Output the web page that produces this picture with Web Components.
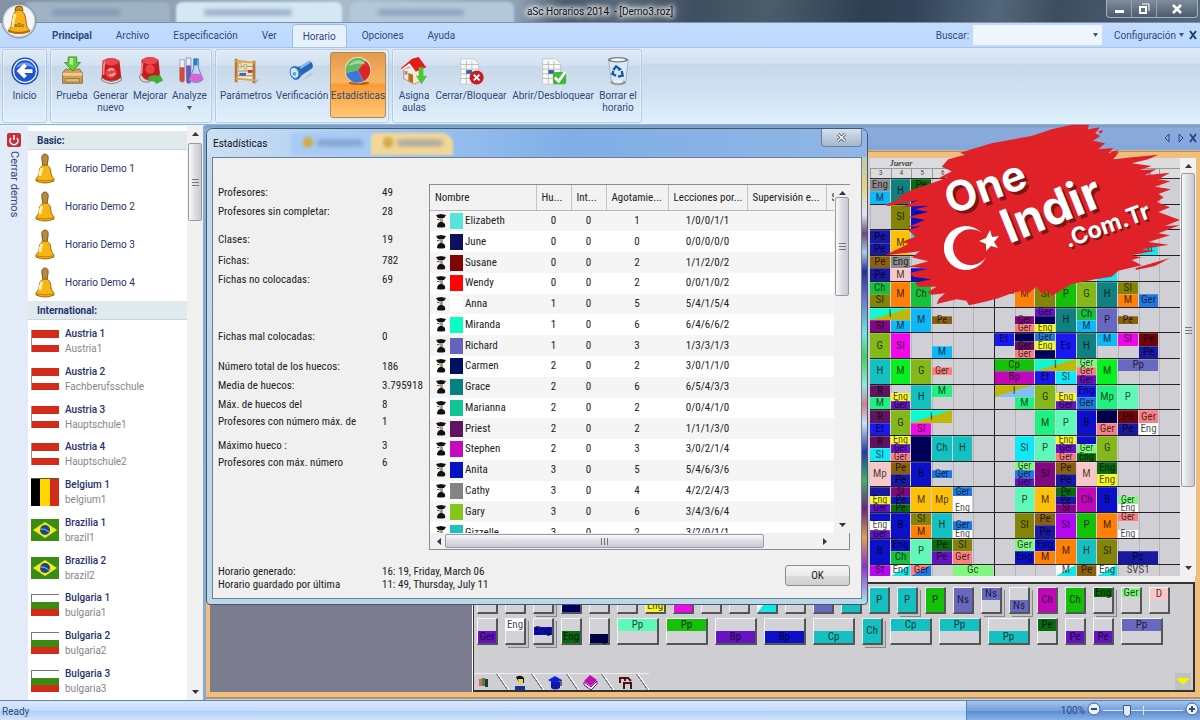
<!DOCTYPE html>
<html lang="es">
<head>
<meta charset="utf-8">
<title>aSc Horarios 2014 - [Demo3.roz]</title>
<style>
  :root {
    --ui: Roboto, "Open Sans", sans-serif;
    --dlg: "Roboto Condensed", "Open Sans Condensed", Roboto, sans-serif;
    --ink: #2d4a7c;
  }
  html, body { margin: 0; height: 100%; }
  body { font: 10px/13px var(--ui); color: var(--ink); overflow: hidden; }
</style>
</head>
<body>
<asc-app></asc-app>
<script>
const BASE = '<style>*{box-sizing:border-box}button,input{font:inherit;color:inherit;margin:0;padding:0;border:0;background:none}a{color:inherit;text-decoration:none}</style>';
function define(name, html, init) {
  const t = document.createElement('template');
  t.innerHTML = BASE + html;
  customElements.define(name, class extends HTMLElement {
    constructor() {
      super();
      this.attachShadow({ mode: 'open' }).append(t.content.cloneNode(true));
    }
    connectedCallback() { if (init && !this.ready) { this.ready = true; init(this.shadowRoot, this); } }
  });
}

const ICONS = {
  back: '<circle cx="16" cy="16" r="14.500" fill="#1446b4"/><circle cx="16" cy="16" r="13" fill="#eaf2ff"/><circle cx="16" cy="16" r="11.500" fill="#1d55cf"/><path d="M6 13a11 11 0 0 1 20 0q-10-5-20 0" fill="#6f9dee"/><path d="M7 16l8-8 3 3-3 3h9v4h-9l3 3-3 3z" fill="#fff"/>',
  box: '<path d="M6 18l3-4h15l3 4v11H6z" fill="#cf9d55" stroke="#92672b"/><path d="M6 18h21v3H6z" fill="#efcf95"/><path d="M9 24h15v4H9z" fill="#dcb57b" stroke="#a4783b"/><path d="M12 1h9v6h4l-8 9-9-9h4z" fill="#62cf3b" stroke="#2f9a20"/><path d="M14 2h3v8l-4-2z" fill="#b7f096"/>',
  bin: '<path d="M7 5q9-6 18 0l2 19q-10 8-21 0z" fill="#c51a20"/><ellipse cx="16" cy="6" rx="8" ry="4" fill="#e8484e"/><path d="M6 23q10 8 21 0v3q-10 7-21 0z" fill="#ddd8d8" stroke="#897979"/><circle cx="16" cy="18" r="6" fill="#e64444"/><path d="M13 16a4 4 0 0 1 6-1m1 3a4 4 0 0 1-6 2" stroke="#ffb0a8" stroke-width="2" fill="none"/><path d="M9 6q-1 8-1 14" stroke="#f48a8a" stroke-width="2" fill="none"/>',
  better: '<path d="M7 4q9-6 18 0l2 19q-10 8-21 0z" fill="#c51a20"/><ellipse cx="16" cy="5" rx="8" ry="4" fill="#e8484e"/><path d="M5 21q-1 7 9 7l3-2q-8 0-10-6z" fill="#ddd8d8" stroke="#897979"/><circle cx="16" cy="14" r="5" fill="#e64444"/><path d="M13 24q4-5 12-3l1-2 4 7-8 4 0-2q-5-1-9-4z" fill="#42ad35"/><path d="M8 7q-1 6-1 12" stroke="#f48a8a" stroke-width="2" fill="none"/>',
  tubes: '<path d="M5 4h5v22q-2 4-5 0z" fill="#f3eaf2" stroke="#9ea5c3"/><path d="M5 12h5v14q-2 4-5 0z" fill="#d54c36"/><path d="M12 2h5v18h-5z" fill="#e6edf8" stroke="#8d9dc3"/><path d="M12 10h5v18q-2 3-5 0z" fill="#6c58b5"/><path d="M20 3h5v10l5 12q-6 6-15 1l5-13z" fill="#bfd5f5" stroke="#5d7fb9"/><path d="M20 3h4v7h-4z" fill="#287fc1"/><path d="M18 19h9l3 6q-7 5-14 1z" fill="#d765d6"/>',
  abacus: '<path d="M5 5h20v21H5z" fill="#efe6d0"/><path d="M4 3h3v25H4zM23 5h3v24h-3z" fill="#b7792f"/><path d="M5 4l20 2v2L5 7zm0 19l21 2v2L5 25z" fill="#dba45c"/><path d="M7 11h16M7 16h16M7 21h16" stroke="#9b8460"/><path d="M8 8h3v5H8zm6 1h3v5h-3z" fill="#eddb9b" stroke="#9c8c50" stroke-width=".5"/><path d="M18 15h5v3h-5z" fill="#c93228"/><path d="M9 18h7v3H9z" fill="#3469bb"/><path d="M26 26l4-2-4 6z" fill="#a7b0ba"/>',
  torch: '<path d="M18 25l11-7-4 1-10 8z" fill="#a9bbcc"/><path d="M9 12l6-1 9-6q5 3 3 8l-9 6-5 4z" fill="#2666b7"/><path d="M14 13l11-7" stroke="#8dbceb" stroke-width="2"/><ellipse cx="9" cy="18" rx="6" ry="7.500" transform="rotate(-20 9 18)" fill="#2f70b9"/><ellipse cx="8" cy="18" rx="4" ry="5.500" transform="rotate(-20 8 18)" fill="#c9e8f8"/><circle cx="8" cy="19" r="2" fill="#7d9db8"/>',
  pie: '<ellipse cx="17" cy="29" rx="11" ry="2" fill="#b96415"/><circle cx="16" cy="15" r="14" fill="#fff3e7"/><path d="M16 15L3 18A13 13 0 0 1 24 5z" fill="#62bb5d"/><path d="M16 15l8-10a13 13 0 0 1-2 22z" fill="#dc2525"/><path d="M16 15l6 12A13 13 0 0 1 3 18z" fill="#3c78d5"/><path d="M5 11q10-12 20-2-12-2-20 2" fill="#fff" opacity=".4"/>',
  house: '<path d="M5 13v11l11 6 9-4V11z" fill="#f4ead6" stroke="#b2946e"/><path d="M2 13L14 3l7-2 8 11-12 5-6-7-7 6z" fill="#e31b1b"/><path d="M3 15l8-6 6 8" fill="none" stroke="#fff" stroke-width="2"/><path d="M10 18l5 2v9l-5-2z" fill="#be6c24"/><path d="M6 16h3v4H6z" fill="#8b92a6"/><path d="M21 12h5v9h4l-6 9-6-9h3z" fill="#4cc632"/>',
  sheet: '<path d="M5 3h14l5 5v22H5z" fill="#fafafa" stroke="#c2c5cb"/><path d="M5 9h19M5 14h19M5 19h19M5 24h19M11 5v25M17 5v25" stroke="#bbb"/><path d="M11 15h6v4h-6z" fill="#3065a5"/>',
  trash: '<path d="M6 4h21l-3 25q-8 4-15 0z" fill="#dae8f5" stroke="#a2b1c5"/><ellipse cx="16" cy="4" rx="11" ry="3" fill="#79828c"/><ellipse cx="16" cy="4" rx="8" ry="1.500" fill="#f4f8fa"/><path d="M11 15l3-4 4 3-2 1m4 1l1 5-5 1m-2-1l-4-2 1-3" fill="none" stroke="#1956aa" stroke-width="2.500"/><ellipse cx="16" cy="28" rx="8" ry="2.500" fill="#858d96"/><ellipse cx="16" cy="27" rx="6" ry="2" fill="#eee"/>',
};
ICONS.close = ICONS.sheet + '<circle cx="22" cy="23" r="7.500" fill="#c81d25"/><path d="M19 20l6 6m0-6l-6 6" stroke="#fff" stroke-width="2"/>';
ICONS.open = ICONS.sheet + '<rect x="16" y="17" width="14" height="13" rx="2" fill="#42b83a"/><path d="M18 23l4 4 7-10" fill="none" stroke="#fff" stroke-width="3"/>';

const BELL = '<path d="M14 1q4 0 3 6l-1 6h-4l-1-6q-1-6 3-6" fill="#b58a3c" stroke="#7b5a20"/><path d="M14 12q6 0 6 9 1 3 3 5v2q-9 4-18 0v-2q2-2 3-5 0-9 6-9" fill="#f7b516" stroke="#a06a08"/><path d="M11 15q-2 4-2 8" stroke="#fff0a0" stroke-width="3" fill="none"/><path d="M6 27q8 2 16 0" stroke="#c27c08" fill="none"/>';
const FLAGS = {
  at: '<path d="M0 3h28v22H0z" fill="#fff"/><path d="M0 3h28v8H0zm0 15h28v7H0z" fill="#d42a1a"/><path d="M.5 3v22" stroke="#a88"/>',
  be: '<path d="M0 0h9v28H0z"/><path d="M9 0h10v28H9z" fill="#ffd800"/><path d="M19 0h9v28h-9z" fill="#d42a1a"/><path d="M0 .500h28" stroke="#554"/>',
  br: '<path d="M0 3h28v22H0z" fill="#3a8c12"/><path d="M2 14L14 6l12 8-12 8z" fill="#fbe623"/><circle cx="14" cy="14" r="5" fill="#174a86"/><path d="M9 13q5-1 9 3" stroke="#9fc0d4" fill="none"/>',
  bg: '<path d="M0 3h28v8H0z" fill="#fff"/><path d="M0 11h28v7H0z" fill="#3a8c12"/><path d="M0 18h28v7H0z" fill="#d42a1a"/><path d="M0 3.500h28M.5 3v9" stroke="#777" fill="none"/>',
  bell: BELL,
};

define('asc-titlebar', `<style>
:host{display:grid;grid-template-columns:1fr auto 1fr;align-items:start;height:23px;position:relative;overflow:hidden;border-bottom:1px solid #7d8fa5;
 background:linear-gradient(100deg,#8294a4 0,#8fa1b2 14%,#a9bdcd 30%,#8fa3b4 43%,#4a5b6c 47%,#586878 52%,#3f4f5f 58%,#4c5c6b 64%,#2f3f50 72%,#33445a 76%,#54677a 83%,#3d4d5e 88%,#58697c 100%)}
.tab{position:absolute;top:2px;height:24px;border-radius:6px 6px 0 0;background:#a9bfd0;filter:blur(1px)}
.t1{left:24px;width:146px;background:#9fb3c4}.t2{left:176px;width:166px;background:#d5e7f3}.t3{left:350px;width:164px;background:#b3c8d8}
.tab i{position:absolute;top:8px;height:5px;border-radius:3px;background:#6e86a5;left:28px;right:50px;filter:blur(2px);opacity:.7}
h1{grid-column:2;margin:5px 0 0;font-size:10px;line-height:14px;font-weight:400;color:#111;position:relative;text-shadow:0 0 4px #fff,0 0 6px #fff,0 0 6px #fff,0 0 9px #fff}
.w{justify-self:end;display:flex;margin-right:2px;position:relative;height:18px;border:1px solid #a3b1bd;border-top:0;border-radius:0 0 4px 4px;background:linear-gradient(#7f8e9b,#4c5c6c)}
.w button{width:25px;display:grid;place-items:center;border-right:1px solid #95a2ae}.w button:last-child{width:40px;border:0}
</style><div class="tab t1"><i></i></div><div class="tab t2"><i></i></div><div class="tab t3"><i></i></div>
<h1>aSc Horarios 2014&nbsp; - [Demo3.roz]</h1>
<div class="w"><button aria-label="Minimizar"><svg width="12" height="12"><path d="M2 7h9v3H2z" fill="#fff"/></svg></button><button aria-label="Restaurar"><svg width="12" height="12" fill="none" stroke="#fff" stroke-width="2"><path d="M2 4h6v6H2z"/><path d="M4 1h7v7" stroke-width="1"/></svg></button><button aria-label="Cerrar"><svg width="12" height="12"><path d="M2 2l8 8m0-8l-8 8" stroke="#fff" stroke-width="2.500"/></svg></button></div>`);

define('asc-menu', `<style>
:host{display:flex;align-items:stretch;height:24px;padding-left:40px;background:linear-gradient(#c2dcff,#bdd9ff);position:relative}
a{padding:0 12px;line-height:26px}.b{font-weight:700}
.on{margin:1px 3px 0;padding:0 10px;line-height:24px;background:#e6f1fc;border:1px solid #9bbbe3;border-bottom:0;border-radius:4px 4px 0 0}
.r{margin-left:auto;display:flex;align-items:center;gap:4px;padding-right:2px}
input{width:129px;height:20px;background:#eef5fe;padding:0 14px 0 4px}
.s{position:relative;margin-right:8px}.s svg{position:absolute;right:4px;top:8px}
button{display:flex;align-items:center;gap:3px}
.logo{position:absolute;left:1px;top:-21px;width:36px;height:38px}
</style><svg class="logo" viewBox="0 0 36 38"><circle cx="18" cy="19" r="17" fill="#cdd1d8" stroke="#7f858f"/><circle cx="18" cy="19" r="15" fill="#f6f6f8"/><circle cx="18" cy="8" r="4" fill="#c9901c" stroke="#8c5a08"/><path d="M18 8q6 0 7 11 0 7 4 10-11 5-22 0 4-3 4-10 1-11 7-11" fill="#f8b31a" stroke="#a66a08"/><path d="M14 12q-2 6-2 13" stroke="#ffe994" stroke-width="3" fill="none"/><path d="M8 29q10 4 20 0" stroke="#b46e0a" stroke-width="2" fill="none"/><text x="18" y="25" text-anchor="middle" font-size="6" font-weight="700" fill="#8a5a10">aSc</text></svg>
<a href="#" class="b">Principal</a><a href="#">Archivo</a><a href="#">Especificación</a><a href="#">Ver</a><a href="#" class="on">Horario</a><a href="#">Opciones</a><a href="#">Ayuda</a>
<div class="r"><label for="q">Buscar:</label><span class="s"><input id="q" type="text"><svg width="5" height="4"><path d="M0 0h5L2.500 4z" fill="#456"/></svg></span>
<button>Configuración<svg width="5" height="4"><path d="M0 0h5L2.500 4z" fill="#456"/></svg></button><button aria-label="Cerrar documento"><svg width="10" height="10"><path d="M2 1l6 8m0-8L2 9" stroke="#1d3c70" stroke-width="2"/></svg></button></div>`);

define('ribbon-button', `<style>
:host{display:block;flex:none;width:var(--w,40px)}
button{width:100%;height:66px;margin-top:2px;padding-top:3px;display:flex;flex-direction:column;align-items:center;gap:3px;white-space:nowrap;line-height:12px;border-radius:3px}
:host([on]) button{background:linear-gradient(#e39a4f,#f9b562 45%,#fb9b36 50%,#ffc774);border:1px solid #b08a58;padding-top:2px}
svg{flex:none}.i{padding:1px}
</style><button><svg class="i" width="32" height="32" viewBox="0 0 32 32"></svg><span><slot></slot></span></button>`,
  (r, h) => { r.querySelector('.i').innerHTML = ICONS[h.getAttribute('icon')]; h.style.setProperty('--w', h.getAttribute('w') + 'px'); });

define('ribbon-group', `<style>:host{display:flex;flex:none;height:74px;padding:0 2px;border:1px solid #b5cbe3;border-radius:3px;background:linear-gradient(#dfeaf6,#d3e1f0 15px,#c7d8ea 16px,#d6e5f4 68%,#dff0fc);box-shadow:inset 0 0 0 1px #ffffff60}</style><slot></slot>`);

define('asc-ribbon', `<style>:host{display:flex;gap:3px;height:78px;padding:1px 2px;background:linear-gradient(#dde9f6,#d3e1f0 15px,#c7d8ea 16px,#d2e1f1 60%,#def2fd);border-top:1px solid #a4c4ea;border-bottom:1px solid #8db2dc}</style>
<ribbon-group><ribbon-button icon="back" w="39">Inicio</ribbon-button></ribbon-group>
<ribbon-group><ribbon-button icon="box" w="38">Prueba</ribbon-button><ribbon-button icon="bin" w="39">Generar<br>nuevo</ribbon-button><ribbon-button icon="better" w="40">Mejorar</ribbon-button><ribbon-button icon="tubes" w="39">Analyze<br><svg width="5" height="4" style="display:block;margin:4px auto"><path d="M0 0h5L2.500 4z" fill="#456"/></svg></ribbon-button></ribbon-group>
<ribbon-group><ribbon-button icon="abacus" w="56">Parámetros</ribbon-button><ribbon-button icon="torch" w="56">Verificación</ribbon-button><ribbon-button icon="pie" w="56" on>Estadísticas</ribbon-button></ribbon-group>
<ribbon-group><ribbon-button icon="house" w="38">Asigna<br>aulas</ribbon-button><ribbon-button icon="close" w="76">Cerrar/Bloquear</ribbon-button><ribbon-button icon="open" w="88">Abrir/Desbloquear</ribbon-button><ribbon-button icon="trash" w="42">Borrar el<br>horario</ribbon-button></ribbon-group>`);

/* Scroll bar: attributes give direction, thumb start and thumb length */
define('asc-scroll', `<style>
:host{display:flex;flex-direction:column;align-items:center;background:#f1f1f1;width:16px;padding:5px 0}
:host([h]){flex-direction:row;width:auto;height:16px;padding:0 5px}
.t{flex:var(--n) 1 0;width:14px;border:1px solid #979ba4;border-radius:2px;background:linear-gradient(90deg,#fafafa,#dcdde2 50%,#c8cad2);display:grid;place-items:center}
:host([h]) .t{width:auto;height:14px;background:linear-gradient(#fafafa,#dcdde2 50%,#c8cad2)}
.a{flex:var(--a) 1 0}.z{flex:var(--z) 1 0}
svg{flex:none}:host([h]) svg{transform:rotate(-90deg)}
.g{width:7px;height:7px;background:repeating-linear-gradient(#777 0 1px,transparent 1px 3px)}
:host([h]) .g{background:repeating-linear-gradient(90deg,#777 0 1px,transparent 1px 3px)}
</style><svg width="7" height="5"><path d="M0 5h7L3.500 1z" fill="#334"/></svg><i class="a"></i><div class="t"><i class="g"></i></div><i class="z"></i><svg width="7" height="5"><path d="M0 0h7L3.500 4z" fill="#334"/></svg>`,
  (r, h) => { const [a, n, z] = h.getAttribute('parts').split(' '); h.style.setProperty('--a', a); h.style.setProperty('--n', n); h.style.setProperty('--z', z); });

define('demo-item', `<style>
:host{display:flex;flex:1 1 0;min-height:0}
a{display:flex;align-items:center;gap:6px;padding-left:3px;line-height:15px;color:#27306e}
svg{width:28px;height:28px;flex:none}:host([flag=bell]) svg{width:28px;height:33px}
small{display:block;font-size:10px;color:#86868a}
:host([sub]) b{font-weight:500}b{font-weight:400}
</style><a href="#"><svg viewBox="0 0 28 28"></svg><span><b><slot></slot></b><small></small></span></a>`,
  (r, h) => {
    const f = h.getAttribute('flag'), s = r.querySelector('svg'), sub = h.getAttribute('sub');
    if (f === 'bell') s.setAttribute('viewBox', '0 0 28 31');
    s.innerHTML = FLAGS[f];
    if (sub) r.querySelector('small').textContent = sub; else r.querySelector('small').remove();
  });

define('demo-panel', `<style>
:host{display:flex;width:206px;flex:none;border-top:1px solid #eef5ff;border-right:3px solid #88abd8;background:#e3ebf8}
.rail{width:28px;display:flex;flex-direction:column;align-items:center;padding-top:7px;gap:4px}
.rail button{writing-mode:vertical-rl;font-size:11px;line-height:14px}
.list{flex:1;display:flex;flex-direction:column;background:#fff;padding-top:5px;min-width:0}
h2{margin:0;height:19px;padding-left:9px;font-size:10px;line-height:19px;background:#e0e9ec;border-bottom:1px solid #c9d6dd;color:#1d3470;flex:none}
.n{margin-bottom:2px}
</style><div class="rail"><svg width="14" height="14"><rect width="14" height="14" rx="2" fill="#c3303a"/><path d="M4 5a4 4 0 1 0 6 0M7 2v5" stroke="#fff" stroke-width="1.500" fill="none"/></svg><button>Cerrar demos</button></div>
<nav class="list"><h2>Basic:</h2></nav><asc-scroll parts="7 76 467"></asc-scroll>`,
  r => {
    const l = r.querySelector('.list');
    const add = (flag, t, sub) => { const e = document.createElement('demo-item'); e.setAttribute('flag', flag); if (sub) e.setAttribute('sub', sub); e.textContent = t; l.append(e); };
    for (let i = 1; i < 5; i++) add('bell', 'Horario Demo ' + i);
    const h = document.createElement('h2'); h.textContent = 'International:'; h.className = 'n'; l.append(h);
    [['at','Austria 1','Austria1'],['at','Austria 2','Fachberufsschule'],['at','Austria 3','Hauptschule1'],['at','Austria 4','Hauptschule2'],['be','Belgium 1','belgium1'],['br','Brazilia 1','brazil1'],['br','Brazilia 2','brazil2'],['bg','Bulgaria 1','bulgaria1'],['bg','Bulgaria 2','bulgaria2'],['bg','Bulgaria 3','bulgaria3']].forEach(a => add(...a));
  });

const C = { gy:'#8c8c8c', cy:'#10e8f8', sk:'#10b8f8', te:'#108080', dg:'#0a6a10', ol:'#848408', nb:'#1818a0', bl:'#0c10c8', nv:'#00005c', or:'#ff8008', yo:'#ffc008', ye:'#f8f820', gr:'#18c040', g2:'#14c008', g3:'#08f020', mi:'#20f080', aq:'#60f8b8', lg:'#80f880', gg:'#84b818', br:'#8a6010', pk:'#f8c8c8', sa:'#f88080', pu:'#800880', p2:'#6414c0', pr:'#601460', mg:'#f008e8', m2:'#c008b8', vi:'#6868c0', dr:'#700408', b2:'#2078e0', tq:'#14c0c0', wh:'#fff', st:'#b408f0', es:'#1818f0', no:'transparent',
  d1:'linear-gradient(to bottom right,#10f8d0 50%,#c0b808 50%)', d2:'linear-gradient(to bottom right,#c0b808 50%,#80c0f8 50%)', d3:'linear-gradient(to bottom right,#fff 50%,#10e8e8 50%)', d4:'linear-gradient(to bottom right,#f88080 50%,#2078e0 50%)' };

/* One string per class; a block is column.span.start.rows.colour.text on six sub-rows */
const ROWS = [
 '0.1.1.3.gy.Eng 0.1.4.3.sk.M 1.1.1.6.te.H 2.1.1.3.dg.Pe 2.1.4.3.nb.',
 '1.1.1.6.ol.SI 2.1.1.6.bl.Pe',
 '0.1.1.3.nb.Pe 0.1.4.3.nb.Pe 1.1.1.6.yo.M 2.1.1.3.cy. 13.1.4.3.cy.SI',
 '0.1.1.3.br.Pe 0.1.4.3.nb.Pe 1.1.1.3.gy.Eng 1.1.4.3.pk.M 2.1.4.3.bl. 8.1.4.3.cy. 11.1.4.3.cy.',
 '0.1.1.3.gr.Ch 0.1.4.3.ol.SI 1.1.1.6.or.M 2.1.1.6.gr.Ch 6.1.1.3.ol.Pe 7.1.1.6.or.M 8.1.1.6.ol.SI 9.1.1.6.g2.P 10.1.1.6.gg.G 11.1.1.6.te.H 12.1.1.3.ol.SI 12.1.4.3.or.M 13.1.4.3.b2.Ger',
 '0.2.1.3.d1.I 0.1.4.3.pu.SI 1.1.4.3.sk.M 2.1.1.6.sk.M 3.1.3.2.br.Pe 7.1.3.2.pu.Ger 7.1.5.2.sa.Ger 8.1.1.2.p2.Ger 8.1.3.2.nv. 8.1.5.2.ye.Eng 9.1.1.6.te.H 10.1.1.3.gr.Ch 10.1.4.3.sk.M 11.1.1.6.vi.P 12.1.3.2.br.Pe',
 '0.1.1.6.gg.G 1.1.1.6.mg.SI 3.1.4.3.sk.M 6.1.1.3.es.Et 7.1.1.2.nv. 7.1.3.2.pr.Ger 7.1.5.2.sa.Ger 8.1.1.2.b2.Ger 8.1.3.2.ye.Eng 8.1.5.2.nv. 9.1.1.6.es.Es 10.1.1.6.te.H 11.1.1.3.sk.M 12.1.1.3.mg.SI 13.1.1.3.dr.Pe 13.1.4.3.nb.Pe',
 '0.1.1.6.tq.H 1.1.1.6.g3.M 2.1.1.6.gg.G 3.1.3.2.sa.Ger 6.2.1.3.g2.Cp 6.2.4.3.m2.Bp 8.2.1.3.d1.I 8.1.4.3.es.Et 9.1.4.3.cy.SI 10.1.1.2.lg.Ger 10.1.3.2.sa.Ger 10.1.5.2.p2.Ger 11.1.1.6.g3.M 12.2.1.3.vi.Pp',
 '0.1.1.3.pr.R 0.1.4.3.mi.M 1.1.3.2.ye.Eng 1.1.5.2.p2.Ger 2.1.1.6.tq.H 3.1.1.3.mi.M 6.2.1.3.d2.I 7.1.4.3.mi.M 8.1.1.6.gg.G 9.1.3.2.ye.Eng 9.1.5.2.p2.Ger 10.1.1.3.es.Eng 10.1.4.3.b2.Ger 11.1.1.6.mi.Mp 12.1.1.6.aq.P',
 '0.1.1.3.pr.R 0.1.4.3.es.Et 1.1.1.6.gg.G 2.2.1.3.d1.I 2.1.4.3.mg.SI 8.1.1.6.mi.M 9.1.1.6.aq.P 10.1.1.6.bl.B 11.1.1.3.nv.Eng 11.1.4.3.sa.Ger 12.1.1.3.dr.Pe 12.1.4.3.nb.Pe 13.1.1.3.sa.Ger 13.1.4.3.wh.Eng',
 '0.1.1.3.pr.R 0.1.4.3.cy.SI 1.1.1.2.ye.Eng 1.1.3.2.p2.Ger 1.1.5.2.sa.Ger 2.1.1.6.nv.D 3.1.1.6.tq.Ch 4.1.1.6.tq.H 7.1.1.6.cy.SI 8.1.1.6.aq.P 9.1.1.2.ye.Eng 9.1.3.2.p2.Ger 9.1.5.2.sa.Ger 10.1.1.2.bl. 10.1.3.2.lg.Ger 10.1.5.2.dg.Eng 11.1.1.6.gg.G',
 '0.1.1.6.pk.Mp 1.1.1.3.br.Pe 1.1.4.3.nb.Pe 2.1.1.6.bl.B 3.1.3.2.b2.Ger 7.1.1.2.lg.Ger 7.1.3.2.b2.Ger 7.1.5.2.p2.Ger 8.1.1.6.pu.SI 9.1.1.3.br.Pe 9.1.4.3.nb.Pe 10.1.1.6.pk.M 11.1.1.3.dg.Eng 11.1.4.3.ye.Eng',
 '0.1.1.2.nb. 0.1.3.2.ye.Eng 0.1.5.2.p2.Ger 1.1.1.2.pu.SI 1.1.3.2.nb.Pe 1.1.5.2.dg.Pe 2.1.1.6.yo.M 3.1.1.6.yo.Mp 4.1.1.2.b2.Ger 4.1.3.2.wh. 4.1.5.2.wh.Eng 7.1.1.6.aq.P 8.1.1.6.yo.M 9.1.1.2.dg.Pe 9.1.3.2.nb.Pe 9.1.5.2.pu.SI 10.1.1.6.m2.Ch 11.1.1.6.bl.B 12.1.3.2.lg.Ger 12.1.5.2.wh.Eng',
 '0.1.1.2.bl. 0.1.3.2.wh.Eng 0.1.5.2.p2.Ger 1.1.1.6.bl.B 2.1.1.3.ol.SI 2.1.4.3.or.M 3.1.1.6.tq.H 4.1.3.2.b2.Ger 4.1.5.2.wh.Eng 7.1.1.6.ol.SI 8.1.1.3.br.Pe 8.1.4.3.nb.Pe 9.1.1.6.st.St 10.1.1.6.g2.P 11.1.1.6.or.M 12.1.1.2.sa.Ger 12.1.5.2.wh.Eng',
 '0.1.1.6.bl.B 1.1.1.3.bl.Eng 1.1.4.3.gr.Ch 2.1.1.6.aq.P 3.1.1.3.dg.Pe 3.1.4.3.p2.Pe 4.1.1.3.ol.SI 4.1.4.3.sa.Ger 7.1.1.3.lg.Ger 7.1.4.3.bl.Eng 8.1.1.3.bl.Eng 8.1.4.3.or.M 9.1.1.6.or.M 10.1.1.6.tq.H 11.1.1.6.ol.SI 12.2.4.3.nb.Pc',
 '0.1.1.6.st.St 1.1.1.6.d3.Eng 2.1.1.6.d4.Ger 4.2.1.6.lg.Gc 9.1.1.6.d3.M 10.1.1.6.br.Pe 11.1.1.6.d3.Eng 12.2.1.6.no.SVS1',
];

define('time-grid', `<style>
:host{display:grid;grid-template-columns:minmax(0,1fr) 15px;grid-template-rows:minmax(0,1fr);min-width:0;font:11px/12px var(--dlg);color:#000}
.g{display:flex;flex-direction:column;background:#cfcfd5;position:relative;overflow:hidden}
.d,.n{display:grid;grid-template-columns:repeat(15,1fr);background:#dcdcde;text-align:center;font-size:7px;color:#444;flex:none}
.d{height:11px;line-height:11px;font-family:"Liberation Serif",serif;font-style:italic;font-weight:700;border-bottom:1px solid #999;font-size:8px}.d span{grid-column:1/4}
.n{height:10px;line-height:9px;border-bottom:1px solid #333}.n span{border-left:1px solid #999}
.r{flex:26 1 0;min-height:0;display:grid;grid-template-columns:repeat(15,minmax(0,1fr));grid-template-rows:repeat(6,minmax(0,1fr));border-bottom:1px solid #222;
 background:repeating-linear-gradient(90deg,#b4b4ba 0 1px,transparent 1px calc(100% / 15))}
.r:last-child{flex-grow:12;border:0}
.r span{display:grid;place-items:center;align-content:center;text-align:center;color:#000000b8;margin-right:1px;line-height:12px;min-height:0;box-shadow:inset 0 1px #ffffff30}
.r .t{font-size:10px;line-height:8px}
.bar{position:absolute;left:40%;top:11px;bottom:0;width:1px;background:#222}
</style><div class="g"><div class="d"><span>Juevar</span></div><div class="n"></div><i class="bar"></i></div><asc-scroll parts="5 318 80"></asc-scroll>`,
  r => {
    r.querySelector('.n').innerHTML = [3,4,5,6,7,8,1,2,3,4,5,6,7,8,''].map(x => '<span>' + x + '</span>').join('');
    const g = r.querySelector('.g');
    ROWS.forEach(s => {
      const row = document.createElement('div'); row.className = 'r';
      s.split(' ').forEach(b => {
        const [c, w, y, h, k, t] = b.split('.'), e = document.createElement('span');
        e.style.cssText = `grid-column:${+c + 1}/span ${w};grid-row:${y}/span ${h};background:${C[k]}`;
        if (h === '2') e.className = 't';
        e.textContent = t; row.append(e);
      });
      g.append(row);
    });
  });

/* Unplaced cards: width.colour.position.text[.stack] */
const CARDS = [
 '1.no.f. 1.no.f. 1.no.f..s 1.nv.f. 1.no.f. 1.no.f. 1.ye.b.Eng 1.mg.f. 1.no.f. 1.no.f. 1.d3.f. 1.no.f. 1.vi.f. 1.tq.f. 1.tq.f.P 1.tq.f.P.s 1.g2.f.P 1.vi.f.Ns 1.vi.t.Ns.s 1.vi.b.Ns.s 1.m2.f.Ch 1.g2.f.Ch 1.dg.c.Eng.s 1.lg.c.Ger 1.pk.t.D',
 '1.p2.b.Ger 1.wh.t.Eng.s 1.bl.m.Eng.s 1.dg.b.Eng 1.nv.l.Eng 2.aq.t.Pp 2.g2.t.Pp 2.p2.b.Bp 2.bl.b.Bp 2.tq.b.Cp 1.tq.f.Ch.s 2.tq.t.Cp 2.tq.t.Pp 2.tq.b.Pp 1.dg.t.Pe 1.p2.b.Pe 1.p2.b.Pe 2.vi.t.Pp',
];
define('card-tray', `<style>
:host{display:flex;flex-direction:column;background:#cfcfd3;border:2px solid #333;border-left-width:1px;box-shadow:-1px 0 #fff;padding:3px 2px 0 3px;font:11px/12px var(--dlg);color:#000000c0;overflow:hidden}
.row{display:flex;gap:7px;margin-bottom:4px;flex:none}
.row div{width:21px;height:27px;flex:none;display:flex;flex-direction:column;background:#d3d3d7;border:1px solid #f5f5f5;border-right:2px solid #555;border-bottom:2px solid #555;text-align:center}
.row .w{width:42px}.row .s{box-shadow:2px 2px #c4c4c8,3px 3px #888}
span{display:block;line-height:12px;height:12px}
.f span{height:24px;line-height:24px}.b span,.l span{margin-top:12px}.m span{margin-top:8px;height:8px;line-height:8px}.c span{height:9px;line-height:9px}.l span{margin-top:15px;height:9px;line-height:9px}
.foot{margin-top:auto;display:flex;align-items:end;flex:none;margin-left:-3px}
.foot button{width:35px;height:17px;display:flex;align-items:center;padding-left:4px;border-top:1px solid #eee;background:linear-gradient(55deg,transparent 71%,#777 72% 74%,#fff 75% 77%,transparent 78%)}
.foot .y{margin-left:auto;width:16px;padding:0 1px;background:#c0c0c0;border:0}
</style><div class="row"></div><div class="row"></div>
<div class="foot">
<button aria-label="Horario"><svg width="14" height="14"><path d="M1 4h3v7H1z" fill="#d66"/><path d="M4 3h3v8H4z" fill="#484"/><path d="M7 4h3v8H7z" fill="#333"/></svg></button>
<button aria-label="Profesores"><svg width="14" height="15"><path d="M3 2q5-3 8 1v5H9L5 6z" fill="#111"/><path d="M5 4h5v6H6z" fill="#e8d060"/><path d="M2 11h10v4H2z" fill="#1830a0"/></svg></button>
<button aria-label="Clases"><svg width="15" height="15"><path d="M7 1l7 4-7 4-7-4z" fill="#1020e0"/><path d="M3 7h9v6q-5 3-9 0z" fill="#1018a8"/><path d="M13 5v6" stroke="#000"/></svg></button>
<button aria-label="Asignaturas"><svg width="15" height="15"><path d="M7 0l7 5-6 6-7-5z" fill="#c010b0"/><path d="M1 7l7 5 6-6v3l-6 6-7-5z" fill="#fff" stroke="#808"/></svg></button>
<button aria-label="Aulas"><svg width="15" height="15" stroke="#501010" stroke-width="2" fill="none"><path d="M1 3h9l3 3M2 3v5m5-5v3M5 8h9M6 8v6m7-6v6"/></svg></button>
<button class="y" aria-label="Mostrar"><svg width="14" height="9"><path d="M0 1h14L7 8z" fill="#f4f400"/></svg></button></div>`,
  r => r.querySelectorAll('.row').forEach((row, i) => {
    row.innerHTML = CARDS[i].split(' ').map(c => { const [w, k, p, t, s] = c.split('.'); return `<div class="${p}${w > 1 ? ' w' : ''}${s ? ' s' : ''}"><span style="background:${C[k]}">${t}</span></div>`; }).join('');
  }));

const STATS = [['Profesores:','49',0],['Profesores sin completar:','28',2],['Clases:','19',11],['Fichas:','782',4],['Fichas no colocadas:','69',2],['Fichas mal colocadas:','0',40],['Número total de los huecos:','186',13],['Media de huecos:','3.795918',2],['Máx. de huecos del','8',2],['Profesores con número máx. de','1',0],['Máximo hueco :','3',7],['Profesores con máx. número','6',0]];
const PEOPLE = [['Elizabeth','#58e4da',0,1,'1/0/0/1/1'],['June','#101060',0,0,'0/0/0/0/0'],['Susane','#800404',0,2,'1/1/2/0/2'],['Wendy','#ff0404',0,2,'0/0/1/0/2'],['Anna','#fff',1,5,'5/4/1/5/4'],['Miranda','#08ffc4',1,6,'6/4/6/6/2'],['Richard','#6464bc',1,3,'1/3/3/1/3'],['Carmen','#001060',2,2,'3/0/1/1/0'],['Grace','#088080',2,6,'6/5/4/3/3'],['Marianna','#10c494',2,2,'0/0/4/1/0'],['Priest','#601464',2,2,'1/1/1/3/0'],['Stephen','#c808c0',2,3,'3/0/2/1/4'],['Anita','#0414c0',3,5,'5/4/6/3/6'],['Cathy','#848484',3,4,'4/2/2/4/3'],['Gary','#84c41c',3,6,'3/4/3/6/4'],['Gizzelle','#20c0bc',3,2,'3/2/0/1/1']];

define('teacher-list', `<style>
:host{display:grid;grid-template-columns:minmax(0,1fr) 15px;grid-template-rows:minmax(0,1fr) 16px;border:1px solid #8a8d92;background:#f0f0f0}
.v{overflow:hidden;background:#fff}
table{border-collapse:collapse;table-layout:fixed;width:405px;height:358px}
thead tr{height:25px}
th{font-weight:400;text-align:left;padding:0 0 0 5px;border-right:1px solid #c4c4c8;border-bottom:1px solid #b8b8bc;background:#f2f2f2;white-space:nowrap}
td{text-align:center;padding:0;line-height:12px}
tbody tr:nth-child(odd){background:#f5f5f5}
.n{display:flex;align-items:center;padding-left:6px;gap:2px}
.n i{width:13px;height:16px;margin-left:2px}
</style><div class="v"><table><colgroup><col width="106"><col width="35"><col width="35"><col width="62"><col width="79"><col width="79"><col></colgroup>
<thead><tr><th>Nombre</th><th>Hu...</th><th>Int...</th><th>Agotamie...</th><th>Lecciones por...</th><th>Supervisión e...</th><th>S</th></tr></thead><tbody></tbody></table></div>
<asc-scroll parts="2 94 220"></asc-scroll><asc-scroll h parts="3 316 58"></asc-scroll>`,
  r => r.querySelector('tbody').innerHTML = PEOPLE.map(([n, c, h, a, l]) => `<tr><td><div class="n"><svg width="10" height="14"><path d="M0 1l5-1 5 1-2 3H2z" fill="#111"/><path d="M3 4h4v4H4z" fill="#b5977c"/><path d="M1 13q0-4 3-5h2q4 1 3 5-4 1-8 0" fill="#111"/><path d="M1 5h2v1H1z" fill="#555"/></svg><i style="background:${c}"></i>${n}</div></td><td>${h}</td><td>0</td><td>${a}</td><td>${l}</td><td></td><td></td></tr>`).join(''));

define('stats-dialog', `<style>
:host{display:flex;flex-direction:column;border:1px solid #44586c;border-radius:7px 7px 4px 4px;padding:0 5px 5px;font:11px/13px var(--dlg);color:#222;overflow:hidden;
 background:linear-gradient(#b8ddf0 0 4%,transparent 4%) left/6px 100% no-repeat,linear-gradient(#8fc5ea,#e8cf80 12%,#dfe6f2 18%,#704878 22%,#b0c8e0 26%,#2030a0 30%,#7078c8 36%,#70e8e0 43%,#40d060 48%,#90e8e0 54%,#d08090 58%,#c8e0f8 62%,#2838a8 68%,#48b060 74%,#702080 80%,#e0a050 86%,#9030d0 92%,#a8e8f0) right/6px 100% no-repeat,
 linear-gradient(#c4d8ec,#bcd7e8)}
header{display:flex;align-items:center;height:28px;flex:none;position:relative;margin:0 -5px;padding-left:6px;background:linear-gradient(90deg,#cde0f2,#b4d2f5 16%,#9cc4f2 30%,#82aee6 55%,#8fb6e6)}
h2{margin:0;font:10px/13px var(--ui);color:#111}
.tb{position:absolute;top:4px;height:22px;width:82px;border-radius:5px 12px 0 0;filter:blur(1px);background:#a7cbf5}.o{background:#f3d797}
.tb i{position:absolute;left:26px;right:10px;top:7px;height:6px;border-radius:3px;background:#6880a8;filter:blur(2px);opacity:.6}.tb:before{content:"";position:absolute;left:12px;top:4px;width:10px;height:11px;border-radius:5px;background:#cfae4c;filter:blur(1px)}
.x{margin-left:auto;align-self:start;width:41px;height:18px;margin-right:5px;border:1px solid #6f7f94;border-top:0;border-radius:0 0 4px 4px;display:grid;place-items:center;background:linear-gradient(#d4e0ee,#a5b7cd);position:relative}
.c{flex:1;background:#f0f0f0;border:1px solid #6f7f90;display:grid;grid-template-columns:211px 1fr;grid-template-rows:366px 1fr;padding:26px 11px 0 5px;min-height:0}
dl{margin:0;display:flex;flex-direction:column}
dl div{display:grid;grid-template-columns:164px 1fr;flex:none}.k div{line-height:17px}
dt{white-space:nowrap}dd{margin:0;white-space:nowrap}
.f{grid-column:1/3;display:flex;justify-content:space-between;align-items:start}.f dl{padding-top:15px}
.ok{width:65px;height:21px;margin-top:15px;border:1px solid #8a8d92;border-radius:3px;background:linear-gradient(#f4f4f4,#ebebeb 50%,#dcdcdc 51%,#d0d0d0)}
</style><header><div class="tb" style="left:84px"><i></i></div><div class="tb o" style="left:164px"><i></i></div><h2>Estadísticas</h2><button class="x" aria-label="Cerrar"><svg width="11" height="9"><path d="M2 1l7 7m0-7L2 8" stroke="#445" stroke-width="3"/><path d="M2 1l7 7m0-7L2 8" stroke="#fff" stroke-width="1.500"/></svg></button></header>
<div class="c"><dl class="k"></dl><teacher-list></teacher-list>
<div class="f"><dl><div><dt>Horario generado:</dt><dd>16: 19, Friday, March 06</dd></div><div><dt>Horario guardado por última</dt><dd>11: 49, Thursday, July 11</dd></div></dl><button class="ok">OK</button></div></div>`,
  r => r.querySelector('.k').innerHTML = STATS.map(([a, b, m]) => `<div style="margin-top:${m}px"><dt>${a}</dt><dd>${b}</dd></div>`).join(''));

define('asc-workspace', `<style>
:host{display:flex;flex-direction:column;flex:1;position:relative;min-width:0}
.tabs{height:26px;flex:none;display:flex;justify-content:end;align-items:center;gap:4px;padding-right:2px;background:linear-gradient(#7f9fc4 0 2px,#8bacda 3px,#84a7dc);border-bottom:1px solid #d5b58d}
.doc{flex:1;min-height:0;display:flex;flex-direction:column;padding:6px 5px 5px 4px;background:#f0bf80;border:1px solid #b7915f;border-width:1px 0 2px;margin-bottom:1px}
.in{flex:1;min-height:0;display:flex;flex-direction:column;background:#7b7c8e}
.top{flex:1;min-height:0;display:flex;background:#cfcfd5}.top i{flex:0 0 660px}.top time-grid{flex:1}
card-tray{height:110px;margin-left:263px;flex:none}
.gap{height:6px;background:#f0f0f0;flex:none}
stats-dialog{position:absolute;left:0;top:3px;width:662px;height:477px}
</style><div class="tabs"><svg width="9" height="10" fill="none" stroke="#24478c"><path d="M6 1v8L2 5z"/></svg><svg width="9" height="10" fill="none" stroke="#24478c"><path d="M3 1v8l4-4z"/></svg><svg width="9" height="10"><path d="M1 1l6 8m0-8L1 9" stroke="#24478c" stroke-width="2"/></svg></div>
<div class="doc"><div class="in"><div class="top"><i></i><time-grid></time-grid></div><div class="gap"></div><card-tray></card-tray></div></div>
<stats-dialog></stats-dialog>`);

define('asc-status', `<style>
:host{display:flex;align-items:stretch;height:20px;border-top:1px solid #5c83b8;background:linear-gradient(#dbe9fc,#c4dbf9 50%,#b2d0f7 55%,#d0e4fc)}
span{padding:1px 2px;line-height:20px;flex:1}
div{width:234px;display:flex;align-items:center;justify-content:end;gap:2px;padding-right:1px;background:linear-gradient(#a3c4ee,#749fda 50%,#5f8fd2 55%,#86b0e6);border-left:1px solid #5c83b8}
input{appearance:none;width:80px;height:14px;background:linear-gradient(#dfeaf8,#dfeaf8) center/100% 1px no-repeat,linear-gradient(#dfeaf8,#dfeaf8) center/1px 9px no-repeat}
input::-webkit-slider-thumb{appearance:none;width:8px;height:12px;background:#e4ecf6;border:1px solid #3a5a8c;border-radius:1px 1px 4px 4px}
</style><span>Ready</span><div><label for="z">100%</label><button aria-label="Alejar"><svg width="14" height="14"><circle cx="7" cy="7" r="6" fill="#e8f0fa" stroke="#48638f"/><path d="M4 7h6" stroke="#334e7c" stroke-width="2"/></svg></button><input id="z" type="range" value="28"><button aria-label="Acercar"><svg width="14" height="14"><circle cx="7" cy="7" r="6" fill="#e8f0fa" stroke="#48638f"/><path d="M4 7h6M7 4v6" stroke="#334e7c" stroke-width="2"/></svg></button></div>`);

define('promo-badge', `<style>:host{display:block;position:absolute;right:0;top:120px;width:335px;height:190px;pointer-events:none}
svg{display:block;font-family:Inter,"Open Sans",sans-serif;font-weight:700}</style>
<svg width="335" height="190" viewBox="0 0 335 190"><g transform="scale(.33333)" fill="#e02228">
<path d="M230 140L250 118 300 104 285 98 380 70 500 48 560 28 620 14 672 14 668 28 705 22 690 40 706 48 684 62 720 70 700 88 745 84 730 100 762 96 745 118 800 112 880 104 850 118 800 130 860 138 825 150 875 148 840 166 915 158 880 178 916 184 870 200 918 208 880 222 896 232 876 246 915 262 880 276 945 300 900 318 945 316 880 340 915 346 850 366 912 374 830 388 870 392 800 406 830 412 800 420 830 436 760 452 740 470 690 478 620 492 590 510 560 528 548 512 530 522 515 500 490 520 470 512 440 520 400 535 360 545 312 556 304 542 275 538 230 548 215 552 222 536 240 520 200 524 188 516 215 500 160 500 150 488 200 478 145 470 135 458 190 446 130 440 190 424 140 412 165 394 60 406 130 372 110 366 150 350 130 330 170 318 125 322 180 300 130 290 190 276 150 268 200 256 110 262 160 240 70 258 60 254 120 232 90 234 150 206 200 190 250 172 215 178 260 154Z"/>
<path d="M812 444L915 414 870 438 812 450zM700 34l14-4-6 12zM735 96l26-6-14 14z"/></g>
<g fill="#7c1418"><text transform="translate(89 98) rotate(-20)" font-size="42">One</text><text transform="translate(147 127) rotate(-22)" font-size="47">Indir</text><text transform="translate(205 130) rotate(-20)" font-size="23">.Com.Tr</text></g>
<g fill="#fff"><text transform="translate(86 95) rotate(-20)" font-size="42">One</text><text transform="translate(144 124) rotate(-22)" font-size="47">Indir</text><text transform="translate(203 128) rotate(-20)" font-size="23">.Com.Tr</text>
<path d="M117 113A22 22 0 1 0 121 137A18 18 0 1 1 117 113z"/><path d="M125 110l2 7 7-1-5 6 4 6-7-2-5 5 0-7-7-3 7-3z"/></g></svg>`);

define('asc-app', `<style>:host{display:flex;flex-direction:column;height:100vh;position:relative;overflow:hidden;background:#bfdbff}main{flex:1;min-height:0;display:flex}</style>
<asc-titlebar></asc-titlebar><asc-menu></asc-menu><asc-ribbon></asc-ribbon><main><demo-panel></demo-panel><asc-workspace></asc-workspace></main><asc-status></asc-status><promo-badge></promo-badge>`);
</script>
</body>
</html>
